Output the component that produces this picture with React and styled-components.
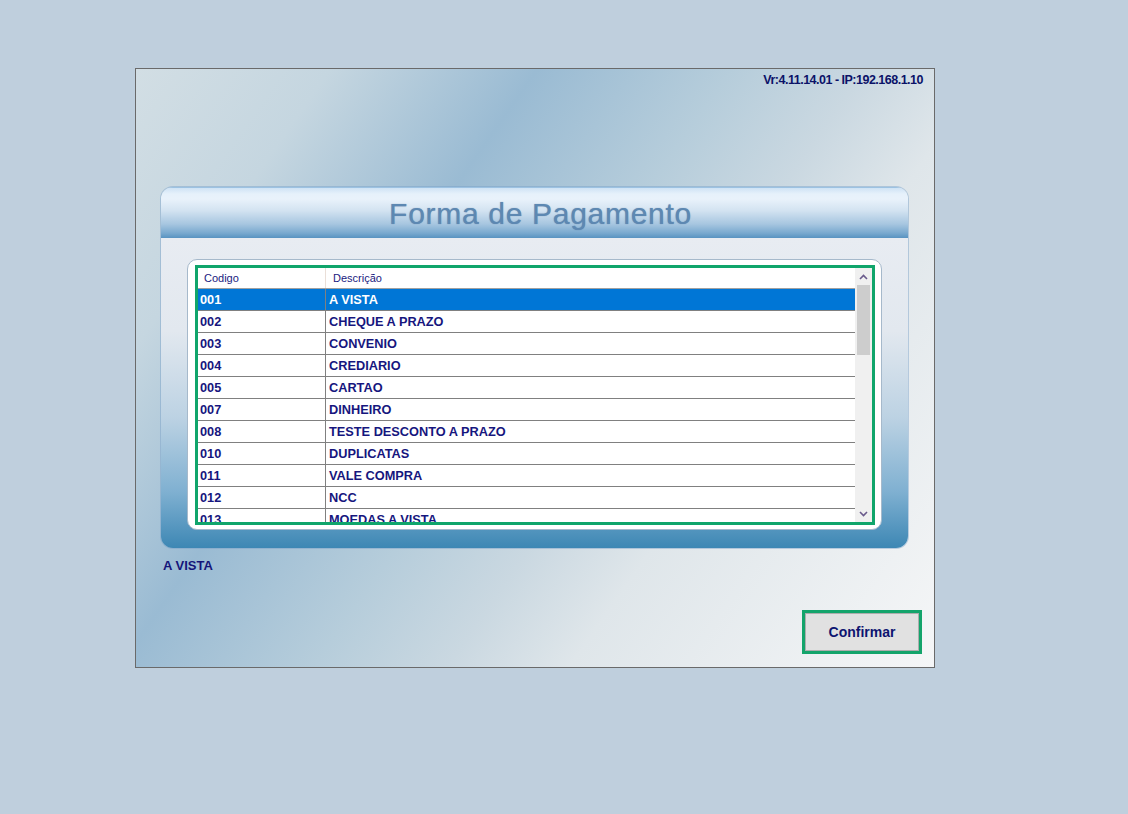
import React from 'react'
import styled, { createGlobalStyle } from 'styled-components'

const rows = [
  ['001', 'A VISTA'],
  ['002', 'CHEQUE A PRAZO'],
  ['003', 'CONVENIO'],
  ['004', 'CREDIARIO'],
  ['005', 'CARTAO'],
  ['007', 'DINHEIRO'],
  ['008', 'TESTE DESCONTO A PRAZO'],
  ['010', 'DUPLICATAS'],
  ['011', 'VALE COMPRA'],
  ['012', 'NCC'],
  ['013', 'MOEDAS A VISTA'],
]

export default function App() {
  return (
    <>
      <GlobalStyle />
      <Window>
        <VersionBar>Vr:4.11.14.01 - IP:192.168.1.10</VersionBar>
        <Panel>
          <PanelHeader>
            <Title>Forma de Pagamento</Title>
          </PanelHeader>
          <PanelBody>
            <WhiteBox>
              <Grid>
                <Table>
                  <HeaderRow>
                    <HeadCode>Codigo</HeadCode>
                    <HeadDesc>Descrição</HeadDesc>
                  </HeaderRow>
                  {rows.map(([code, desc], i) => (
                    <Row key={code} $selected={i === 0}>
                      <CodeCell>{code}</CodeCell>
                      <DescCell>{desc}</DescCell>
                    </Row>
                  ))}
                </Table>
                <Scrollbar>
                  <ScrollButton>
                    <Chevron dir="up" />
                  </ScrollButton>
                  <Thumb />
                  <ScrollTrack />
                  <ScrollButton>
                    <Chevron dir="down" />
                  </ScrollButton>
                </Scrollbar>
              </Grid>
            </WhiteBox>
          </PanelBody>
        </Panel>
        <SelectedLabel>A VISTA</SelectedLabel>
        <ConfirmButton>
          <ButtonFace>Confirmar</ButtonFace>
        </ConfirmButton>
      </Window>
    </>
  )
}

function Chevron({ dir }) {
  return (
    <svg width="9" height="6" viewBox="0 0 9 6">
      <path
        d={dir === 'up' ? 'M1 5 L4.5 1.5 L8 5' : 'M1 1 L4.5 4.5 L8 1'}
        fill="none"
        stroke="#6a5a8c"
        strokeWidth="1.6"
      />
    </svg>
  )
}

const GlobalStyle = createGlobalStyle`
  html, body {
    margin: 0;
    padding: 0;
    background: #bfcfdd;
    height: 814px;
    overflow: hidden;
  }
  body {
    font-family: "Liberation Sans", Arial, sans-serif;
  }
  #root {
    padding-top: 68px;
    padding-left: 135px;
  }
`

const Window = styled.div`
  width: 800px;
  height: 600px;
  box-sizing: border-box;
  border: 1px solid #6a6a6a;
  display: flex;
  flex-direction: column;
  background: linear-gradient(
    125deg,
    #d2dee4 0%,
    #c5d6e0 16%,
    #9abbd3 33%,
    #b6cddb 49%,
    #cad8e1 60%,
    #dfe6ea 70%,
    #f5f6f7 100%
  );
`

const VersionBar = styled.div`
  display: flex;
  justify-content: flex-end;
  padding: 3px 11px 0 0;
  height: 17px;
  line-height: 17px;
  font-family: "Liberation Sans", Arial, sans-serif;
  font-weight: bold;
  font-size: 12.5px;
  letter-spacing: -0.5px;
  color: #0b1268;
`

const Panel = styled.div`
  margin: 98px 0 0 25px;
  width: 747px;
  height: 361px;
  border-radius: 12px;
  overflow: hidden;
  display: flex;
  flex-direction: column;
  box-shadow: 0 0 0 1px rgba(120, 160, 200, 0.45);
`

const PanelHeader = styled.div`
  height: 51px;
  flex: none;
  display: flex;
  align-items: center;
  justify-content: center;
  padding-left: 12px;
  border-top: 1px solid #9cc2e2;
  box-sizing: border-box;
  background: linear-gradient(
    180deg,
    #cfe3f5 0%,
    #e6f1fb 12%,
    #e9f2fb 22%,
    #d3e3f1 45%,
    #a7c6e0 72%,
    #79a9cf 90%,
    #5893c1 100%
  );
`

const Title = styled.span`
  font-family: "Liberation Sans", Arial, sans-serif;
  font-size: 30px;
  letter-spacing: 0.7px;
  color: #5d88b2;
  text-shadow: 0 0 1px rgba(40, 80, 130, 0.55);
  margin-top: 2px;
`

const PanelBody = styled.div`
  flex: 1;
  min-height: 0;
  box-sizing: border-box;
  padding: 21px 26px 18px 26px;
  background: linear-gradient(
    180deg,
    #e8ecf2 0%,
    #e2e8ef 30%,
    #bcd2e3 58%,
    #7fb0d1 82%,
    #3d87b4 100%
  );
`

const WhiteBox = styled.div`
  height: 100%;
  box-sizing: border-box;
  background: #ffffff;
  border: 1px solid #a6b9cb;
  border-radius: 10px;
  padding: 5px 6px 4px 7px;
`

const Grid = styled.div`
  height: 100%;
  box-sizing: border-box;
  border: 3px solid #10a56b;
  display: flex;
  overflow: hidden;
  background: #ffffff;
`

const Table = styled.div`
  flex: 1;
  min-height: 0;
  display: flex;
  flex-direction: column;
  overflow: hidden;
`

const HeaderRow = styled.div`
  flex: none;
  display: flex;
  height: 21px;
  box-sizing: border-box;
  border-bottom: 1px solid #a0a0a0;
  font-size: 11px;
  line-height: 20px;
  color: #1a1a80;
`

const HeadCode = styled.div`
  width: 128px;
  padding-left: 6px;
  box-sizing: border-box;
  border-right: 1px solid #eadfd8;
`

const HeadDesc = styled.div`
  padding-left: 7px;
`

const Row = styled.div`
  flex: none;
  display: flex;
  height: 22px;
  box-sizing: border-box;
  border-bottom: 1px solid #808080;
  font-size: 12.75px;
  font-weight: bold;
  line-height: 22px;
  color: ${p => (p.$selected ? '#ffffff' : '#16167e')};
  background: ${p => (p.$selected ? '#0076d6' : '#ffffff')};
`

const CodeCell = styled.div`
  width: 128px;
  padding-left: 2px;
  box-sizing: border-box;
  border-right: 1px solid #808080;
`

const DescCell = styled.div`
  padding-left: 3px;
  white-space: nowrap;
`

const Scrollbar = styled.div`
  width: 17px;
  flex: none;
  background: #f0f0f0;
  display: flex;
  flex-direction: column;
`

const ScrollButton = styled.div`
  height: 17px;
  flex: none;
  display: flex;
  align-items: center;
  justify-content: center;
`

const Thumb = styled.div`
  height: 70px;
  flex: none;
  margin: 0 2px;
  background: #cdcdcd;
`

const ScrollTrack = styled.div`
  flex: 1;
`

const SelectedLabel = styled.div`
  margin: 10px 0 0 27px;
  font-size: 13px;
  font-weight: bold;
  line-height: 16px;
  color: #14147a;
`

const ConfirmButton = styled.div`
  align-self: flex-end;
  margin: 36px 12px 0 0;
  width: 120px;
  height: 44px;
  box-sizing: border-box;
  border: 3px solid #14a46b;
`

const ButtonFace = styled.div`
  height: 100%;
  box-sizing: border-box;
  border: 1px solid #adadad;
  background: #e1e1e1;
  display: flex;
  align-items: center;
  justify-content: center;
  font-family: "Liberation Sans", Arial, sans-serif;
  font-weight: bold;
  font-size: 14px;
  color: #0d1470;
`
